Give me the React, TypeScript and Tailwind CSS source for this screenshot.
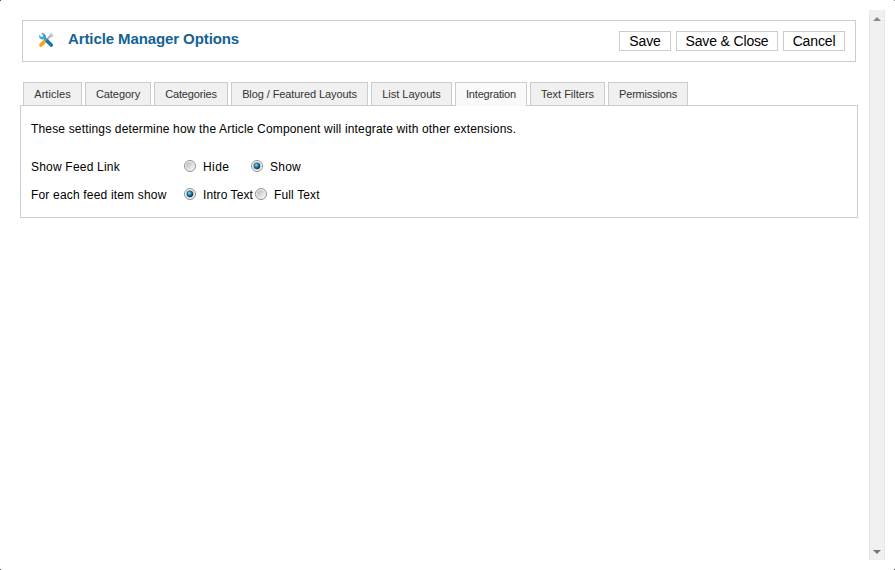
import React from "react";

const tabs = [
  { label: "Articles", size: "w-[59px]", spacing: "tracking-[0.05px]" },
  { label: "Category", size: "w-[66px]", spacing: "tracking-[-0.05px]" },
  { label: "Categories", size: "w-[74px]", spacing: "tracking-[-0.15px]" },
  { label: "Blog / Featured Layouts", size: "w-[137px]", spacing: "tracking-[-0.09px]" },
  { label: "List Layouts", size: "w-[81px]", spacing: "tracking-[0px]" },
  { label: "Integration", size: "w-[72px]", spacing: "tracking-[-0.18px]", active: true },
  { label: "Text Filters", size: "w-[75px]", spacing: "tracking-[0px]" },
  { label: "Permissions", size: "w-[80px]", spacing: "tracking-[-0.18px]" },
];

const actions = [
  { label: "Save", size: "w-[52px]" },
  { label: "Save & Close", size: "w-[102px]" },
  { label: "Cancel", size: "w-[62px]" },
];

function ToolsIcon() {
  return (
    <svg width="16" height="16" viewBox="0 0 16 16" fill="none">
      <path d="M13.4 2.8 8 8.4" stroke="#a3adb1" strokeWidth="1.9" />
      <path d="m11.8 2 1.8-.8.3 1.5 1.2.5-.9 1.6-1.2.3" stroke="#b5bcbf" strokeWidth=".8" />
      <path d="M7.4 8.6 3 13" stroke="#f8a420" strokeWidth="3.8" strokeLinecap="round" />
      <path
        d="M3 1 5.2 3.1 4.9 4.7 3.3 5 1.2 3.1C.6 5.5 2.2 7.5 4.5 7.5l1.3-.2 6 6.7c2 1.7 4.2-.4 2.7-2.3L8 5.6C8.4 2.8 6.3.4 3 1Z"
        fill="#45a3cf"
      />
      <path d="m9.4 9.2 3.8 3.9" stroke="#1c76a9" strokeWidth="3.5" strokeLinecap="round" />
    </svg>
  );
}

function Radio({ on = false }: { on?: boolean }) {
  return (
    <svg width="12" height="12" viewBox="0 0 12 12" className="mr-px mb-0.5 shrink-0">
      <defs>
        <linearGradient id="well" x1="0" y1="0" x2="1" y2="1">
          <stop offset="0" stopColor="#b5b9be" />
          <stop offset="1" stopColor="#f8f8f8" />
        </linearGradient>
        <radialGradient id="dot" cx=".38" cy=".35" r=".65">
          <stop offset="0" stopColor="#a5e4fc" />
          <stop offset=".45" stopColor="#2389b9" />
          <stop offset="1" stopColor="#0a304d" />
        </radialGradient>
      </defs>
      <circle cx="6" cy="6" r="5.5" fill="#f4f4f4" stroke="#8e8f8f" />
      <circle cx="6" cy="6" r="4" fill="url(#well)" />
      {on && <circle cx="6" cy="6" r="3.1" fill="url(#dot)" stroke="#173f5b" strokeWidth=".5" />}
    </svg>
  );
}

export default function App() {
  return (
    <div
      className="relative flex h-[570px] w-[895px] overflow-hidden bg-white text-black"
      style={{ fontFamily: '"Liberation Sans", Arial, sans-serif' }}
    >
      <main className="w-[869px] shrink-0 pt-5 pl-5">
        <header className="ml-0.5 flex h-[42px] w-[834px] items-start border border-[#ccc] pl-[15px]">
          <div className="pt-[11px]">
            <ToolsIcon />
          </div>
          <h1 className="ml-3.5 pt-2 text-[15px] leading-5 font-bold tracking-[-0.1px] text-[#146295]">
            Article Manager Options
          </h1>
          <div className="mt-2.5 mr-2.5 ml-auto flex gap-[5px]">
            {actions.map((a) => (
              <button
                key={a.label}
                className={`${a.size} h-5 border border-[#ccc] text-center text-[14px] leading-[19px] tracking-[-0.15px] whitespace-nowrap`}
              >
                {a.label}
              </button>
            ))}
          </div>
        </header>

        <nav className="relative z-10 mt-5 ml-[3px] flex gap-[3px]">
          {tabs.map((t) => (
            <button
              key={t.label}
              className={`${t.size} ${t.spacing} border border-b-0 border-[#ccc] text-center text-[11px] leading-[22px] whitespace-nowrap text-[#333] ${
                t.active ? "-mb-px h-6 bg-[#f9f9f9] pb-px" : "h-[23px] bg-[#f0f0f0]"
              }`}
            >
              {t.label}
            </button>
          ))}
        </nav>

        <section className="h-[113px] w-[838px] border border-[#ccc] pl-2.5 text-[12px] leading-4">
          <p className="pt-[15px] tracking-[0.162px]">
            These settings determine how the Article Component will integrate with other extensions.
          </p>
          <div className="mt-[22px] flex h-4 items-center">
            <span className="w-[153px] tracking-[0.2px]">Show Feed Link</span>
            <Radio />
            <span className="ml-1.5 w-12 tracking-[0.4px]">Hide</span>
            <Radio on />
            <span className="ml-1.5 tracking-[0.25px]">Show</span>
          </div>
          <div className="mt-3 flex h-4 items-center">
            <span className="w-[153px] tracking-[0.18px]">For each feed item show</span>
            <Radio on />
            <span className="ml-1.5 w-[52px] tracking-[0.08px] whitespace-nowrap">Intro Text</span>
            <Radio />
            <span className="ml-1.5 tracking-[0.14px]">Full Text</span>
          </div>
        </section>
      </main>

      <aside className="mt-2.5 flex h-[550px] w-4 flex-col items-center justify-between border-x border-[#e7e7e7] bg-[#f0f0f0] pt-[7px] pb-[5px]">
        <svg width="8" height="5" viewBox="0 0 8 5">
          <path d="m4 0 4 4H0Z" fill="#888" />
        </svg>
        <svg width="8" height="5" viewBox="0 0 8 5">
          <path d="M0 0h8L4 4Z" fill="#777" />
        </svg>
      </aside>

      <i className="absolute top-0 left-0 size-px bg-[#555]" />
      <i className="absolute top-0 right-0 size-px bg-[#888]" />
      <i className="absolute bottom-0 left-0 size-px bg-[#555]" />
      <i className="absolute right-0 bottom-0 size-px bg-[#555]" />
    </div>
  );
}
